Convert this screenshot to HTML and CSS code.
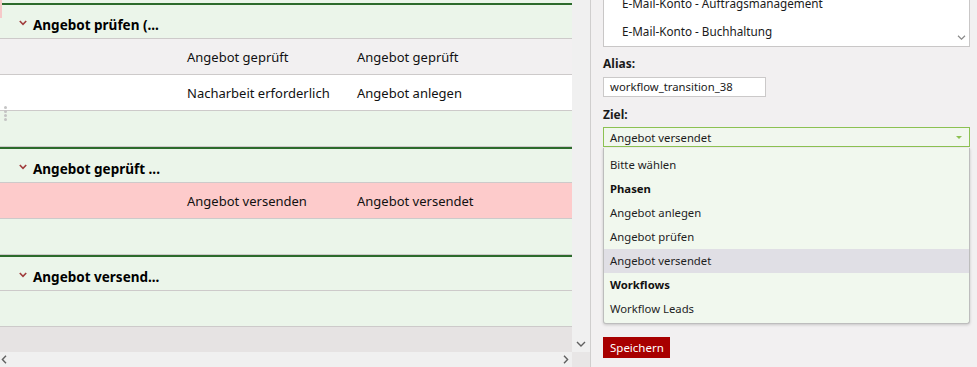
FILE: index.html
```html
<!DOCTYPE html>
<html lang="de">
<head>
<meta charset="utf-8">
<title>Workflow</title>
<link rel="stylesheet" href="styles.css">
</head>
<body>
<div class="app">
  <div class="left">
    <div class="left-main">
      <div class="content">
        <div class="tail"></div>
        <section class="group">
          <div class="ghead"><svg class="chev" width="8" height="6" viewBox="0 0 8 6"><path d="M0.8 1 L4 4.4 L7.2 1" fill="none" stroke="#a03c3c" stroke-width="1.6"/></svg><span>Angebot prüfen (...</span></div>
          <div class="row gray"><span class="c1">Angebot geprüft</span><span class="c2">Angebot geprüft</span></div>
          <div class="row white"><span class="c1">Nacharbeit erforderlich</span><span class="c2">Angebot anlegen</span></div>
          <div class="row empty"></div>
        </section>
        <section class="group">
          <div class="ghead"><svg class="chev" width="8" height="6" viewBox="0 0 8 6"><path d="M0.8 1 L4 4.4 L7.2 1" fill="none" stroke="#a03c3c" stroke-width="1.6"/></svg><span>Angebot geprüft ...</span></div>
          <div class="row pink"><span class="c1">Angebot versenden</span><span class="c2">Angebot versendet</span></div>
          <div class="row empty"></div>
        </section>
        <section class="group">
          <div class="ghead"><svg class="chev" width="8" height="6" viewBox="0 0 8 6"><path d="M0.8 1 L4 4.4 L7.2 1" fill="none" stroke="#a03c3c" stroke-width="1.6"/></svg><span>Angebot versend...</span></div>
          <div class="row empty"></div>
        </section>
        <div class="filler"></div>
        <div class="pinkmark"></div>
        <div class="grip"><i></i><i></i><i></i><i></i></div>
      </div>
      <div class="vscroll">
        <svg width="10" height="6" viewBox="0 0 10 6"><path d="M1 1 L5 5 L9 1" fill="none" stroke="#606060" stroke-width="1.4"/></svg>
      </div>
    </div>
    <div class="hrow">
      <div class="hscroll">
        <svg width="6" height="9" viewBox="0 0 6 9"><path d="M5 0.8 L1.4 4.5 L5 8.2" fill="none" stroke="#606060" stroke-width="1.4"/></svg>
        <svg width="6" height="9" viewBox="0 0 6 9"><path d="M1 0.8 L4.6 4.5 L1 8.2" fill="none" stroke="#606060" stroke-width="1.4"/></svg>
      </div>
      <div class="corner"></div>
    </div>
  </div>

  <aside class="panel">
    <div class="listbox">
      <div class="items">
        <div class="li first">E-Mail-Konto - Auftragsmanagement</div>
        <div class="li">E-Mail-Konto - Buchhaltung</div>
      </div>
      <div class="lscroll">
        <svg width="9" height="5" viewBox="0 0 9 5"><path d="M1 0.8 L4.5 4.2 L8 0.8" fill="none" stroke="#8a8a8a" stroke-width="1.2"/></svg>
      </div>
    </div>

    <label class="lbl lbl-alias">Alias:</label>
    <div class="input">workflow_transition_38</div>

    <label class="lbl lbl-ziel">Ziel:</label>
    <div class="select"><span>Angebot versendet</span><span class="tri"></span></div>
    <div class="dropdown">
      <div class="opt">Bitte wählen</div>
      <div class="opt grp">Phasen</div>
      <div class="opt">Angebot anlegen</div>
      <div class="opt">Angebot prüfen</div>
      <div class="opt hl">Angebot versendet</div>
      <div class="opt grp">Workflows</div>
      <div class="opt">Workflow Leads</div>
    </div>

    <button class="save">Speichern</button>
  </aside>
</div>
</body>
</html>
```
FILE: styles.css
```css
* { box-sizing: border-box; }
html, body { margin: 0; padding: 0; }
body {
  width: 977px;
  height: 367px;
  overflow: hidden;
  font-family: "Noto Sans", "Open Sans", sans-serif;
  color: #111;
  background: #f2f0f1;
}
.app { display: flex; height: 367px; }

.left { width: 590px; display: flex; flex-direction: column; }
.left-main { display: flex; height: 352px; }
.content {
  position: relative;
  width: 572px;
  display: flex;
  flex-direction: column;
  overflow: hidden;
  background: #e6e3e3;
}
.tail { height: 3px; background: #ebf5ea; flex: none; }
.group { border-top: 2px solid #2c6b2c; flex: none; }
.ghead {
  height: 34px;
  background: #ebf5ea;
  border-bottom: 1px solid #cdcaca;
  display: flex;
  align-items: center;
  padding-left: 19px;
  padding-top: 7px;
  font-weight: 700;
  font-size: 13.5px;
  color: #000;
}
.ghead .chev { margin-right: 6px; margin-top: -4px; }
.row {
  height: 36px;
  border-bottom: 1px solid #cdcaca;
  display: flex;
  align-items: center;
  font-size: 13px;
}
.row.gray { background: #f2f0f1; }
.row.white { background: #ffffff; }
.row.pink { background: #fdcbcb; }
.row.empty { background: #ebf5ea; }
.c1 { margin-left: 187px; width: 170px; }
.filler { flex: 1; background: #e6e3e3; }

.pinkmark {
  position: absolute;
  left: 0; top: 0;
  width: 2px; height: 18px;
  background: #f6c9c9;
}
.grip {
  position: absolute;
  left: 4px; top: 106px;
  display: flex; flex-direction: column; gap: 1px;
}
.grip i { display: block; width: 3px; height: 3px; border-radius: 50%; background: #c4c4c4; }

.vscroll {
  width: 18px;
  background: #f0f0f0;
  display: flex;
  flex-direction: column;
  justify-content: flex-end;
  align-items: center;
  padding-bottom: 5px;
}
.hrow { display: flex; height: 15px; }
.hscroll {
  width: 572px;
  background: #f0f0f0;
  display: flex;
  justify-content: space-between;
  align-items: center;
  padding: 0 3px 0 1px;
}
.corner { width: 18px; background: #e8e6e6; }

.panel {
  width: 387px;
  border-left: 1px solid #d0cece;
  background: #f2f0f1;
  padding: 0 7px 0 12px;
  display: flex;
  flex-direction: column;
  align-items: flex-start;
}
.listbox {
  width: 367px;
  height: 47px;
  background: #fff;
  border: 1px solid #c9c7c7;
  border-top: none;
  display: flex;
  overflow: hidden;
}
.items { flex: 1; }
.li {
  height: 28px;
  line-height: 28px;
  padding-left: 18px;
  font-size: 11.7px;
  color: #1a1a1a;
  white-space: nowrap;
}
.li.first { margin-top: -11px; }
.lscroll {
  width: 17px;
  display: flex;
  justify-content: center;
  align-items: flex-end;
  padding-bottom: 6px;
  padding-left: 2px;
}

.lbl {
  display: block;
  font-weight: 700;
  font-size: 12px;
  line-height: 16px;
  color: #1a1a1a;
}
.lbl-alias { margin-top: 9px; }
.lbl-ziel { margin-top: 10px; }
.input {
  margin-top: 5px;
  width: 163px;
  height: 20px;
  background: #fff;
  border: 1px solid #cbc9c9;
  font-size: 11.3px;
  line-height: 18px;
  padding-left: 6px;
  color: #1a1a1a;
}
.select {
  margin-top: 4px;
  width: 367px;
  height: 20px;
  border: 1px solid #8cc152;
  background: #f1f7ee;
  display: flex;
  align-items: center;
  justify-content: space-between;
  padding: 0 7px 0 6px;
  font-size: 11.3px;
  color: #1a1a1a;
}
.tri {
  width: 0; height: 0;
  border-left: 3px solid transparent;
  border-right: 3px solid transparent;
  border-top: 3px solid #8cc152;
}
.dropdown {
  margin-top: 1px;
  width: 367px;
  background: #f1f8ee;
  border: 1px solid #bdbdbd;
  border-top: none;
  border-radius: 0 0 3px 3px;
  box-shadow: 0 1px 3px rgba(0,0,0,0.18);
  padding: 5px 0 2px;
}
.opt {
  height: 24px;
  line-height: 24px;
  padding-left: 6px;
  font-size: 11.3px;
  color: #1e1e1e;
}
.opt.grp { font-weight: 700; color: #111; }
.opt.hl { background: #e0dfe5; }
.save {
  margin-top: 13px;
  width: 67px;
  height: 21px;
  background: #a80000;
  color: #fff;
  border: none;
  font-family: "Noto Sans", "Open Sans", sans-serif;
  font-size: 11.5px;
  text-align: left;
  padding: 0 0 0 7px;
}
```
